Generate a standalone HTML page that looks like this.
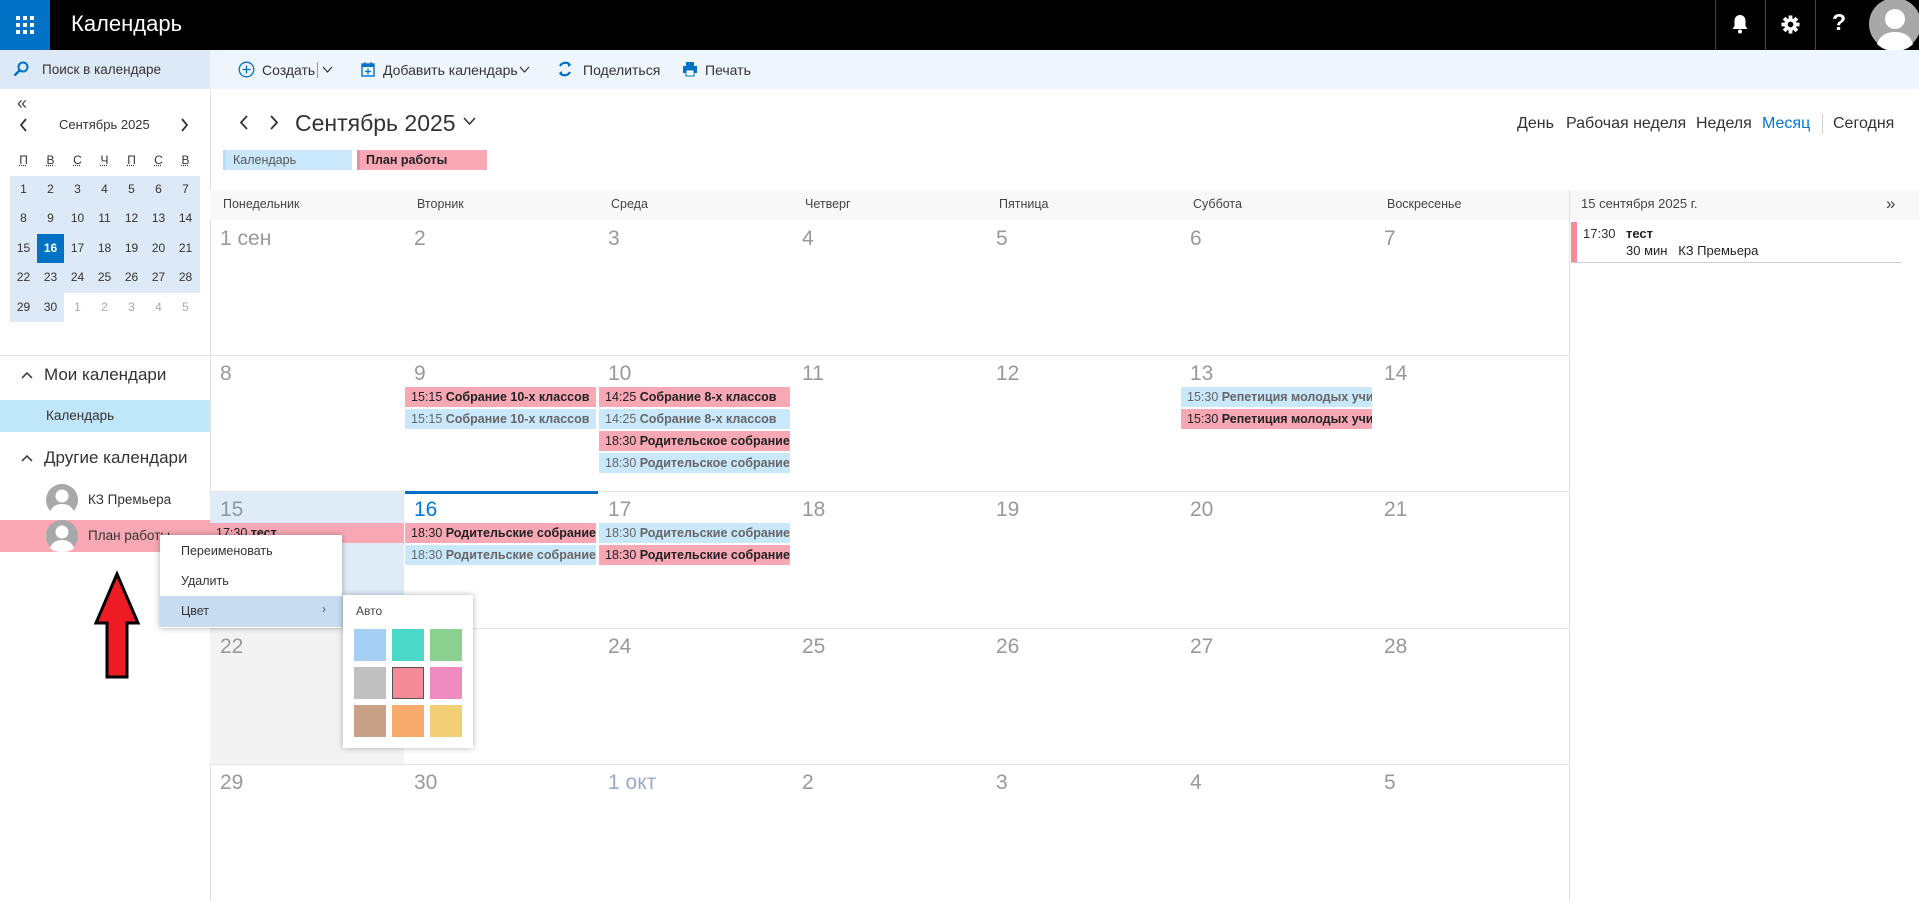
<!DOCTYPE html>
<html><head><meta charset="utf-8">
<style>
*{box-sizing:border-box;margin:0;padding:0}
body{width:1919px;height:901px;overflow:hidden;position:relative;font-family:"Liberation Sans","Noto Sans CJK SC",sans-serif;color:#333;background:#fff}
.a{position:absolute;white-space:nowrap}
.ev{position:absolute;height:20px;font-size:12.5px;line-height:20px;padding-left:6px;overflow:hidden;white-space:nowrap}
.p{background:#f7a8b4;color:#222}
.p b{font-weight:bold}
.b{background:#c9e8fb;color:#666}
.b b{font-weight:bold;color:#666}
.dn{position:absolute;font-size:21px;color:#999;font-weight:300}
.hl{position:absolute;left:210px;width:1359px;height:1px;background:#e4e4e4}
.mc{position:absolute;width:27px;text-align:center;font-size:12px;color:#333}
.sw{position:absolute;width:32px;height:32px}
</style></head><body>
<div class="a" style="left:0;top:0;width:1919px;height:50px;background:#000"></div>
<div class="a" style="left:0;top:0;width:50px;height:50px;background:#0072c6"></div>
<svg class="a" style="left:15px;top:15px" width="20" height="20" viewBox="0 0 20 20" fill="#fff">
<rect x="1" y="1" width="4" height="4"/><rect x="8" y="1" width="4" height="4"/><rect x="15" y="1" width="4" height="4"/>
<rect x="1" y="8" width="4" height="4"/><rect x="8" y="8" width="4" height="4"/><rect x="15" y="8" width="4" height="4"/>
<rect x="1" y="15" width="4" height="4"/><rect x="8" y="15" width="4" height="4"/><rect x="15" y="15" width="4" height="4"/></svg>
<div class="a" style="left:71px;top:11px;font-size:22px;color:#fff">Календарь</div>
<div class="a" style="left:1715px;top:0;width:1px;height:50px;background:#444"></div>
<div class="a" style="left:1765px;top:0;width:1px;height:50px;background:#444"></div>
<div class="a" style="left:1815px;top:0;width:1px;height:50px;background:#444"></div>
<svg class="a" style="left:1731px;top:14px" width="18" height="20" viewBox="0 0 18 20" fill="#fff"><path d="M9 1c-3.5 0-5.5 2.5-5.5 6v5L1.5 15h15L14.5 12V7C14.5 3.5 12.5 1 9 1z"/><circle cx="9" cy="17.5" r="2"/></svg>
<svg class="a" style="left:1781px;top:15px" width="19" height="19" viewBox="0 0 20 20"><g fill="#fff"><circle cx="10" cy="10" r="6.5"/><rect x="8" y="0.5" width="4" height="19"/><rect x="0.5" y="8" width="19" height="4"/><rect x="8" y="0.5" width="4" height="19" transform="rotate(45 10 10)"/><rect x="8" y="0.5" width="4" height="19" transform="rotate(-45 10 10)"/></g><circle cx="10" cy="10" r="3" fill="#000"/></svg>
<div class="a" style="left:1832px;top:9px;font-size:23px;font-weight:bold;color:#fff">?</div>
<svg class="a" style="left:1869px;top:0" width="50" height="50" viewBox="0 0 50 50"><circle cx="26" cy="24" r="26" fill="#a8a8a8"/><circle cx="26" cy="19" r="10" fill="#fff"/><path d="M8 44c3-9 10-12 18-12s15 3 18 12c-5 5-11 7-18 7s-13-2-18-7z" fill="#fff"/></svg>
<div class="a" style="left:0;top:50px;width:1919px;height:39px;background:#eef5fc"></div>
<div class="a" style="left:0;top:50px;width:210px;height:39px;background:#dde9f6"></div>
<svg class="a" style="left:13px;top:61px" width="16" height="16" viewBox="0 0 16 16"><circle cx="10" cy="6" r="4.5" stroke="#0072c6" stroke-width="2" fill="none"/><path d="M6.5 9.5L1.5 14.5" stroke="#0072c6" stroke-width="2.4"/></svg>
<div class="a" style="left:42px;top:62px;font-size:13.5px;color:#333">Поиск в календаре</div>
<svg class="a" style="left:238px;top:61px" width="17" height="17" viewBox="0 0 17 17"><circle cx="8.5" cy="8.5" r="7.3" stroke="#0072c6" stroke-width="1.3" fill="none"/><path d="M8.5 4.5v8M4.5 8.5h8" stroke="#0072c6" stroke-width="1.3"/></svg>
<div class="a" style="left:262px;top:62px;font-size:14px">Создать</div>
<div class="a" style="left:317px;top:62px;width:1px;height:16px;background:#999"></div>
<svg class="a" style="left:322px;top:66px" width="11" height="8" viewBox="0 0 11 8"><path d="M1 1l4.5 5L10 1" stroke="#333" stroke-width="1.2" fill="none"/></svg>
<svg class="a" style="left:361px;top:61px" width="14" height="16" viewBox="0 0 14 16"><rect x="1" y="3" width="12" height="12" stroke="#0072c6" stroke-width="1.4" fill="none"/><rect x="1" y="3" width="12" height="3" fill="#0072c6"/><path d="M7 7.5v6M4 10.5h6M4 1v3M10 1v3" stroke="#0072c6" stroke-width="1.3"/></svg>
<div class="a" style="left:383px;top:62px;font-size:14px">Добавить календарь</div>
<svg class="a" style="left:519px;top:66px" width="11" height="8" viewBox="0 0 11 8"><path d="M1 1l4.5 5L10 1" stroke="#333" stroke-width="1.2" fill="none"/></svg>
<svg class="a" style="left:557px;top:61px" width="16" height="16" viewBox="0 0 16 16"><path d="M3 5A6 6 0 0 1 13 4M13 11A6 6 0 0 1 3 12" stroke="#0072c6" stroke-width="2.2" fill="none"/><path d="M11 1l3 3-3 2zM5 15l-3-3 3-2z" fill="#0072c6"/></svg>
<div class="a" style="left:583px;top:62px;font-size:14px">Поделиться</div>
<svg class="a" style="left:682px;top:61px" width="16" height="16" viewBox="0 0 16 16"><rect x="4" y="1" width="8" height="4" fill="#0072c6"/><rect x="1" y="5" width="14" height="7" fill="#0072c6"/><rect x="4" y="9" width="8" height="6" fill="#fff" stroke="#0072c6"/></svg>
<div class="a" style="left:705px;top:62px;font-size:14px">Печать</div>
<div class="a" style="left:210px;top:89px;width:1px;height:812px;background:#e2e2e2"></div>
<div class="a" style="left:17px;top:93px;font-size:18px;color:#444">«</div>
<svg class="a" style="left:19px;top:118px" width="9" height="14" viewBox="0 0 9 14"><path d="M7 1L2 7l5 6" stroke="#333" stroke-width="1.8" fill="none"/></svg>
<div class="a" style="left:59px;top:117px;font-size:13px;color:#333">Сентябрь 2025</div>
<svg class="a" style="left:180px;top:118px" width="9" height="14" viewBox="0 0 9 14"><path d="M2 1l5 6-5 6" stroke="#333" stroke-width="1.8" fill="none"/></svg>
<div class="a" style="left:10px;top:176px;width:190px;height:117px;background:#dde9f6"></div>
<div class="a" style="left:10px;top:293px;width:54px;height:29px;background:#dde9f6"></div>
<div class="a" style="left:37px;top:234px;width:27px;height:29px;background:#0072c6"></div>
<div id="mini"></div>
<div class="a" style="left:0;top:355px;width:210px;height:1px;background:#e2e2e2"></div>
<svg class="a" style="left:21px;top:371px" width="12" height="8" viewBox="0 0 12 8"><path d="M1 7l5-5 5 5" stroke="#444" stroke-width="1.6" fill="none"/></svg>
<div class="a" style="left:44px;top:365px;font-size:17px;color:#333">Мои календари</div>
<div class="a" style="left:0;top:400px;width:210px;height:32px;background:#c0e6fa"></div>
<div class="a" style="left:46px;top:408px;font-size:13.5px;color:#333">Календарь</div>
<svg class="a" style="left:21px;top:454px" width="12" height="8" viewBox="0 0 12 8"><path d="M1 7l5-5 5 5" stroke="#444" stroke-width="1.6" fill="none"/></svg>
<div class="a" style="left:44px;top:448px;font-size:17px;color:#333">Другие календари</div>
<svg class="a" style="left:46px;top:484px" width="32" height="32" viewBox="0 0 32 32"><circle cx="16" cy="16" r="16" fill="#a8a8a8"/><circle cx="16" cy="12" r="6.5" fill="#fff"/><path d="M4 28c2-6 7-8 12-8s10 2 12 8c-3 3-7 4-12 4s-9-1-12-4z" fill="#fff"/></svg>
<div class="a" style="left:88px;top:492px;font-size:13.5px;color:#333">КЗ Премьера</div>
<div class="a" style="left:0;top:520px;width:210px;height:32px;background:#f7a8b4"></div>
<svg class="a" style="left:46px;top:520px" width="32" height="32" viewBox="0 0 32 32"><circle cx="16" cy="16" r="16" fill="#a8a8a8"/><circle cx="16" cy="12" r="6.5" fill="#fff"/><path d="M4 28c2-6 7-8 12-8s10 2 12 8c-3 3-7 4-12 4s-9-1-12-4z" fill="#fff"/></svg>
<div class="a" style="left:88px;top:528px;font-size:13.5px;color:#333">План работы</div>
<svg class="a" style="left:239px;top:115px" width="10" height="15" viewBox="0 0 10 15"><path d="M8 1L2 7.5 8 14" stroke="#333" stroke-width="1.8" fill="none"/></svg>
<svg class="a" style="left:269px;top:115px" width="10" height="15" viewBox="0 0 10 15"><path d="M2 1l6 6.5L2 14" stroke="#333" stroke-width="1.8" fill="none"/></svg>
<div class="a" style="left:295px;top:110px;font-size:23px;color:#333">Сентябрь 2025</div>
<svg class="a" style="left:463px;top:117px" width="13" height="9" viewBox="0 0 13 9"><path d="M1 1l5.5 6L12 1" stroke="#333" stroke-width="1.6" fill="none"/></svg>
<div class="a" style="left:1517px;top:115px;font-size:16px;color:#333">День</div>
<div class="a" style="left:1566px;top:115px;font-size:16px;color:#333">Рабочая неделя</div>
<div class="a" style="left:1696px;top:115px;font-size:16px;color:#333">Неделя</div>
<div class="a" style="left:1762px;top:115px;font-size:16px;color:#0078d7">Месяц</div>
<div class="a" style="left:1822px;top:114px;width:1px;height:20px;background:#ccc"></div>
<div class="a" style="left:1833px;top:115px;font-size:16px;color:#333">Сегодня</div>
<div class="a" style="left:223px;top:150px;width:129px;height:20px;background:#c9e8fb;border-left:3px solid #b7dff6;font-size:12.5px;line-height:20px;padding-left:7px;color:#555">Календарь</div>
<div class="a" style="left:357px;top:150px;width:130px;height:20px;background:#f7a8b4;border-left:3px solid #f28a9a;font-size:12.5px;line-height:20px;padding-left:6px;color:#222;font-weight:bold">План работы</div>
<div class="a" style="left:210px;top:190px;width:1709px;height:30px;background:#f8f8f8"></div>
<div id="grid"></div>
<div class="a" style="left:1569px;top:190px;width:1px;height:711px;background:#e2e2e2"></div>
<div class="a" style="left:1581px;top:196px;font-size:13px;color:#444">15 сентября 2025 г.</div>
<div class="a" style="left:1886px;top:194px;font-size:17px;color:#444">»</div>
<div class="a" style="left:1571px;top:222px;width:6px;height:40px;background:#f68b98"></div>
<div class="a" style="left:1583px;top:226px;font-size:13px;color:#333">17:30</div>
<div class="a" style="left:1626px;top:226px;font-size:13px;font-weight:bold;color:#222">тест</div>
<div class="a" style="left:1626px;top:243px;font-size:13px;color:#222">30 мин &nbsp; КЗ Премьера</div>
<div class="a" style="left:1571px;top:262px;width:330px;height:1px;background:#ccc"></div>
<div class="a" style="left:160px;top:535px;width:182px;height:93px;background:#fff;box-shadow:0 0 6px rgba(0,0,0,.3)"></div>
<div class="a" style="left:181px;top:544px;font-size:12.5px;color:#333">Переименовать</div>
<div class="a" style="left:181px;top:574px;font-size:12.5px;color:#333">Удалить</div>
<div class="a" style="left:160px;top:596px;width:182px;height:31px;background:#c7dcf0"></div>
<div class="a" style="left:181px;top:604px;font-size:12.5px;color:#333">Цвет</div>
<div class="a" style="left:322px;top:602px;font-size:12px;color:#555">›</div>
<div class="a" style="left:343px;top:595px;width:130px;height:153px;background:#fff;box-shadow:0 0 6px rgba(0,0,0,.3)"></div>
<div class="a" style="left:356px;top:604px;font-size:12px;color:#444">Авто</div>
<div class="sw" style="left:354px;top:629px;background:#a6d0f3"></div>
<div class="sw" style="left:392px;top:629px;background:#4dd9c9"></div>
<div class="sw" style="left:430px;top:629px;background:#8bd08f"></div>
<div class="sw" style="left:354px;top:667px;background:#c0c0c0"></div>
<div class="sw" style="left:392px;top:667px;background:#f68b98;border:1px solid #555"></div>
<div class="sw" style="left:430px;top:667px;background:#ef8bbf"></div>
<div class="sw" style="left:354px;top:705px;background:#c9a088"></div>
<div class="sw" style="left:392px;top:705px;background:#f9aa6d"></div>
<div class="sw" style="left:430px;top:705px;background:#f2ce77"></div>
<svg class="a" style="left:92px;top:570px" width="50" height="110" viewBox="0 0 50 110"><path d="M25 4L4 53h11v54h20V53h11z" fill="#ed1c24" stroke="#000" stroke-width="3"/></svg>
<script>
var m=document.getElementById('mini'),h='';
var cx=[23,50,77,104,131,158,185],wd=['П','В','С','Ч','П','С','В'];
for(var i=0;i<7;i++)h+='<div class="mc" style="left:'+(cx[i]-13)+'px;top:153px;text-decoration:underline dotted">'+wd[i]+'</div>';
var ry=[182,211,241,270,300],d=1;
for(var r=0;r<5;r++)for(var c=0;c<7;c++){var t,col='#333';if(d<=30){t=d}else{t=d-30;col='#aaa'}
if(d==16)col='#fff;font-weight:bold';
h+='<div class="mc" style="left:'+(cx[c]-13)+'px;top:'+ry[r]+'px;color:'+col+'">'+t+'</div>';d++}
m.innerHTML=h;
var g=document.getElementById('grid');h='';
var xs=[210,404,598,792,986,1180,1374],names=['Понедельник','Вторник','Среда','Четверг','Пятница','Суббота','Воскресенье'];
for(i=0;i<7;i++)h+='<div class="a" style="left:'+(xs[i]+13)+'px;top:197px;font-size:12.5px;color:#444">'+names[i]+'</div>';
var ys=[220,355,491,628,764];
h+='<div class="a" style="left:210px;top:491px;width:194px;height:137px;background:#dfebf7"></div>';
h+='<div class="a" style="left:210px;top:628px;width:194px;height:136px;background:#f3f3f3"></div>';
for(r=1;r<5;r++)h+='<div class="hl" style="top:'+ys[r]+'px"></div>';
h+='<div class="a" style="left:405px;top:491px;width:193px;height:3px;background:#0072c6"></div>';
var labels=[['1 сен','2','3','4','5','6','7'],['8','9','10','11','12','13','14'],['15','16','17','18','19','20','21'],['22','23','24','25','26','27','28'],['29','30','1 окт','2','3','4','5']];
for(r=0;r<5;r++)for(c=0;c<7;c++){var col='#999';if(r==2&&c==1)col='#0078d7';if(r==4&&c==2)col='#9aaacc';if(r==2&&c==0)col='#8a9aaa';
h+='<div class="dn" style="left:'+(xs[c]+10)+'px;top:'+(ys[r]+7)+'px;color:'+col+'">'+labels[r][c]+'</div>';}
function ev(c,row,k,cls,t,txt,w){var top=ys[row]+32+k*22;h+='<div class="ev '+cls+'" style="left:'+(xs[c]+(c==0?0:1))+'px;top:'+top+'px;width:'+(w||191)+'px">'+t+' <b>'+txt+'</b></div>'}
ev(1,1,0,'p','15:15','Собрание 10-х классов');ev(1,1,1,'b','15:15','Собрание 10-х классов');
ev(2,1,0,'p','14:25','Собрание 8-х классов');ev(2,1,1,'b','14:25','Собрание 8-х классов');
ev(2,1,2,'p','18:30','Родительское собрание');ev(2,1,3,'b','18:30','Родительское собрание');
ev(5,1,0,'b','15:30','Репетиция молодых учителей');ev(5,1,1,'p','15:30','Репетиция молодых учителей');
ev(0,2,0,'p','17:30','тест',194);
ev(1,2,0,'p','18:30','Родительские собрание');ev(1,2,1,'b','18:30','Родительские собрание');
ev(2,2,0,'b','18:30','Родительские собрание');ev(2,2,1,'p','18:30','Родительские собрание');
g.innerHTML=h;
</script>
</body></html>
